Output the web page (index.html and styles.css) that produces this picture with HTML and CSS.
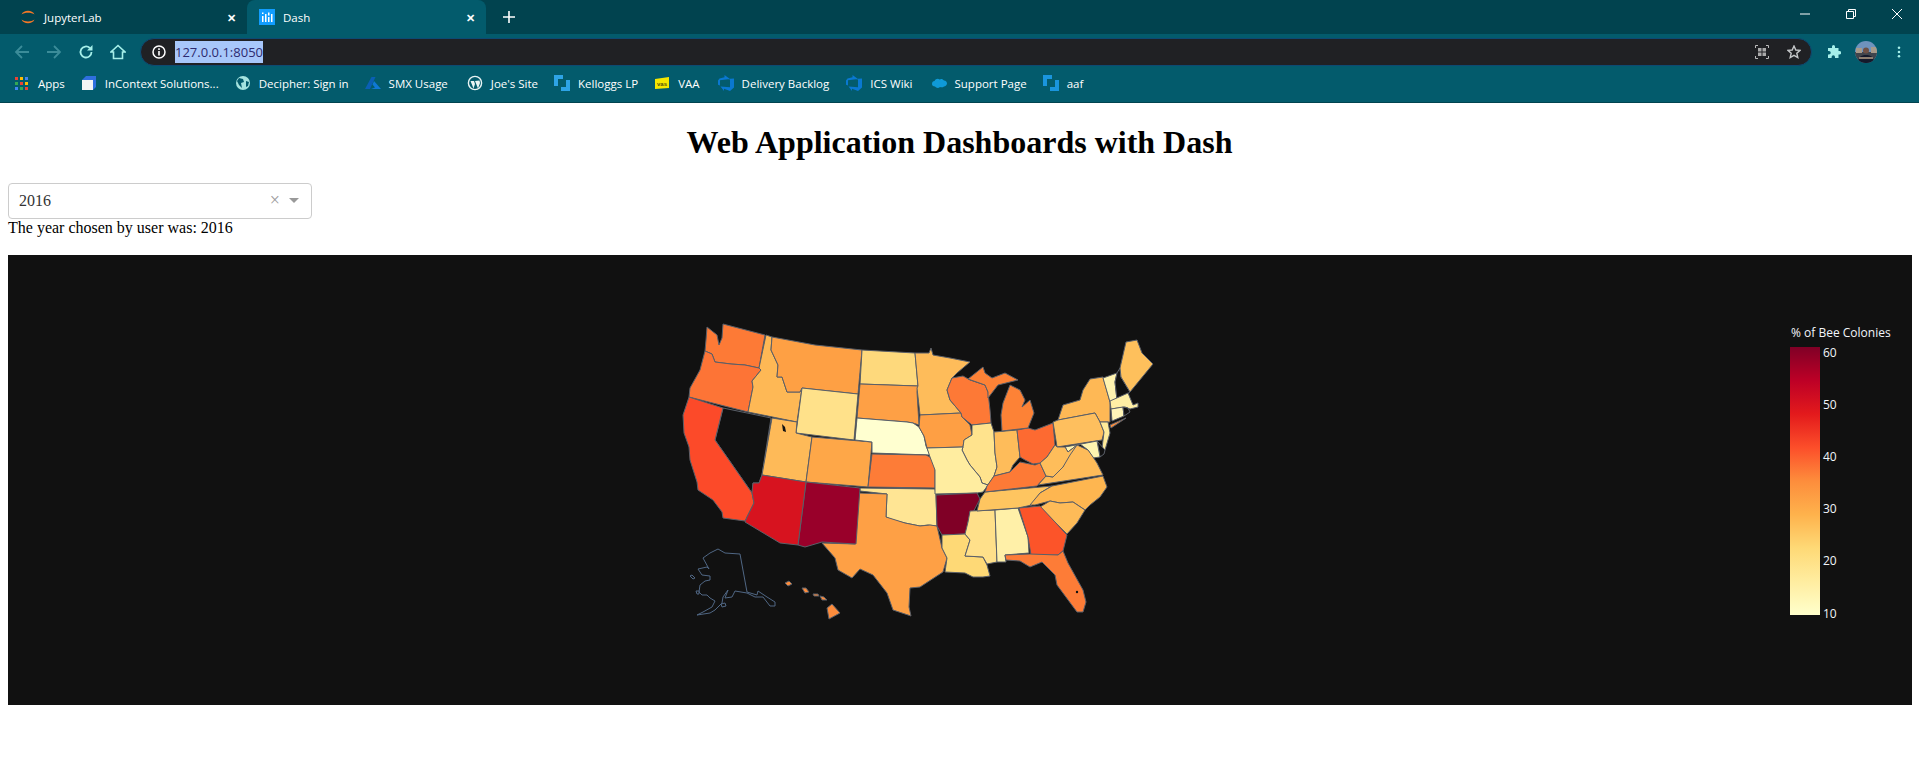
FILE: index.html
```html
<!DOCTYPE html>
<html lang="en">
<head>
    <meta charset="UTF-8">
    <title>Dash</title>
    <link rel="stylesheet" href="styles.css">
</head>
<body>
    <div id="browser">
        <div class="tab-strip">
            <div class="tab">
                <svg class="icon" viewBox="0 0 16 16"><path d="M1.500 5.500C3.500 .5 12.500 .5 14.500 5.500C11.500 3 4.500 3 1.500 5.500ZM1.500 10.500C3.500 15.500 12.500 15.500 14.500 10.500C11.500 13 4.500 13 1.500 10.500Z" fill="#f37726"/></svg>
                <span class="tab-title">JupyterLab</span>
                <span class="tab-close">&#10005;</span>
            </div>
            <div class="tab active">
                <svg class="icon" viewBox="0 0 16 16"><rect width="16" height="16" fill="#119dff"/><path d="M3 7h1.500v6H3zM6 5h1.500v8H6zM9 8h1.500v5H9zM12 5h1.500v8H12zM3 3.500h1.500v1.500H3zM9 3.500h1.500v3H9z" fill="#fff"/></svg>
                <span class="tab-title">Dash</span>
                <span class="tab-close">&#10005;</span>
            </div>
            <svg class="new-tab" viewBox="0 0 12 12"><path d="M6 0v12M0 6h12" stroke="#fff" stroke-width="1.600"/></svg>
            <div class="window-controls">
                <svg viewBox="0 0 10 10"><path d="M0 5h10" stroke="#fff"/></svg>
                <svg viewBox="0 0 10 10"><path d="M.5 2.500h7v7h-7zM2.500 2.500v-2h7v7h-2" fill="none" stroke="#fff"/></svg>
                <svg viewBox="0 0 10 10"><path d="M0 0l10 10M10 0L0 10" stroke="#fff"/></svg>
            </div>
        </div>
        <div class="toolbar">
            <svg class="nav dim" viewBox="0 0 16 16"><path d="M15 8H2M8 2L2 8l6 6" fill="none" stroke="#3b8c99" stroke-width="1.800"/></svg>
            <svg class="nav dim" viewBox="0 0 16 16"><path d="M1 8h13M8 2l6 6-6 6" fill="none" stroke="#3b8c99" stroke-width="1.800"/></svg>
            <svg class="nav" viewBox="0 0 16 16"><path d="M13.500 8A5.500 5.500 0 1 1 11.800 4" fill="none" stroke="#a5efe9" stroke-width="1.800"/><path d="M14.500 1v5.500H9z" fill="#a5efe9"/></svg>
            <svg class="nav" viewBox="0 0 16 16"><path d="M8 1.500L1 8h2.500v6.500h9V8H15z" fill="none" stroke="#a5efe9" stroke-width="1.600"/></svg>
            <div class="omnibox">
                <svg class="info" viewBox="0 0 14 14"><circle cx="7" cy="7" r="6" fill="none" stroke="#fff" stroke-width="1.500"/><path d="M6.200 6h1.600v4.500H6.200zM6.200 3.300h1.600v1.600H6.200z" fill="#fff"/></svg>
                <span class="url">127.0.0.1:8050</span>
                <svg class="qr" viewBox="0 0 14 14"><path d="M.5 3V.5H3M11 .5h2.500V3M13.500 11v2.500H11M3 13.500H.5V11" fill="none" stroke="#bbb"/><path d="M3 3h3.500v3.500H3zM7.500 3H11v3.500H7.500zM3 7.500h3.500V11H3zM7.500 7.500H11V11H7.500z" fill="#aaa"/></svg>
                <svg class="star" viewBox="0 0 14 14"><path d="M7 1l1.800 4 4.200.4-3.200 2.800 1 4.300L7 10.300l-3.800 2.200 1-4.300L1 5.400 5.200 5z" fill="none" stroke="#c4c7c9" stroke-width="1.400"/></svg>
            </div>
            <svg class="puzzle" viewBox="0 0 14 14"><path d="M5 1.500a1.500 1.500 0 0 1 3 0V3h3.500v3h1a1.700 1.700 0 0 1 0 3.500h-1V13H8v-1a1.700 1.700 0 0 0-3.400 0v1H1V9.500h1a1.700 1.700 0 0 0 0-3.500H1V3h4z" fill="#a5efe9"/></svg>
            <svg class="avatar" viewBox="0 0 22 22"><defs><clipPath id="round"><circle cx="11" cy="11" r="11"/></clipPath></defs><g clip-path="url(#round)"><rect width="22" height="22" fill="#6f93bd"/><rect y="11" width="22" height="11" fill="#3f444c"/><path d="M1 7h6v5H1zM16 6h6v6h-6z" fill="#a79a8a"/><path d="M3 22c0-6 3-8 8-8s8 2 8 8z" fill="#14192b"/><circle cx="11" cy="9.500" r="3" fill="#6e5044"/><path d="M4 16h14v2H4z" fill="#8d7e70"/></g></svg>
            <svg class="menu" viewBox="0 0 4 14"><circle cx="2" cy="2" r="1.500" fill="#a5efe9"/><circle cx="2" cy="7" r="1.500" fill="#a5efe9"/><circle cx="2" cy="12" r="1.500" fill="#a5efe9"/></svg>
        </div>
        <div class="bookmarks">
            <div class="bookmark">
                <svg class="icon apps" viewBox="0 0 13 13"><path d="M0 0h3v3H0z" fill="#ea4335"/><path d="M5 0h3v3H5z" fill="#fbbc05"/><path d="M10 0h3v3h-3z" fill="#4285f4"/><path d="M0 5h3v3H0z" fill="#34a853"/><path d="M5 5h3v3H5z" fill="#ea4335"/><path d="M10 5h3v3h-3z" fill="#fbbc05"/><path d="M0 10h3v3H0z" fill="#4285f4"/><path d="M5 10h3v3H5z" fill="#34a853"/><path d="M10 10h3v3h-3z" fill="#ea4335"/></svg>
                Apps
            </div>
            <div class="bookmark">
                <svg class="icon" viewBox="0 0 16 16"><path d="M1 5l4-4h10v11l-3 3z" fill="#2f6fde"/><path d="M1 5h11v10H1z" fill="#f4f4f4"/></svg>
                InContext Solutions...
            </div>
            <div class="bookmark">
                <svg class="icon" viewBox="0 0 16 16"><circle cx="8" cy="8" r="7" fill="#a5e3df"/><path d="M4 3l4 1 1 3-3 1 1 5-3-3-2-4zM11 6l3 1-1 4-2 1z" fill="#035b6c"/></svg>
                Decipher: Sign in
            </div>
            <div class="bookmark">
                <svg class="icon" viewBox="0 0 16 16"><path d="M6.500 2h4L5 14H0z" fill="#0a5fb4"/><path d="M9 6l7 8H6l4-1.500-2.500-3z" fill="#0f78d4"/></svg>
                SMX Usage
            </div>
            <div class="bookmark nudge-3">
                <svg class="icon" viewBox="0 0 16 16"><circle cx="8" cy="8" r="6.600" fill="none" stroke="#e8f4f4" stroke-width="1.400"/><path d="M3.500 6l3 7.500 1.500-4.500-1-3zM8 6l3 7.500L13 8l-.5-2.500z" fill="#e8f4f4"/></svg>
                Joe's Site
            </div>
            <div class="bookmark">
                <svg class="icon" viewBox="0 0 16 16"><path d="M0 0h9v4H4v7H0zM7 16v-4h5V5h4v11z" fill="#2ea4e6"/></svg>
                Kelloggs LP
            </div>
            <div class="bookmark">
                <svg class="icon" viewBox="0 0 16 16"><path d="M1 4l14-2v11L1 14z" fill="#f5e700"/><text class="vas" x="8" y="10.500">vas</text></svg>
                VAA
            </div>
            <div class="bookmark nudge-2">
                <svg class="icon" viewBox="0 0 16 16"><path d="M16 3.500v9L12 16l-6-2.200V16l-3.500-4.500 9.500.8V3.800zM12 4L6.500 0v2.200L1.500 3.600 0 5.500v4.200l2 .9V5.200z" fill="#0a78d1"/></svg>
                Delivery Backlog
            </div>
            <div class="bookmark nudge-1">
                <svg class="icon" viewBox="0 0 16 16"><path d="M16 3.500v9L12 16l-6-2.200V16l-3.500-4.500 9.500.8V3.800zM12 4L6.500 0v2.200L1.500 3.600 0 5.500v4.200l2 .9V5.200z" fill="#0a78d1"/></svg>
                ICS Wiki
            </div>
            <div class="bookmark nudge-2">
                <svg class="icon" viewBox="0 0 16 16"><path d="M1 9c0-2 1-3 2.500-3C4.500 4 7 3 8.500 4.500 10 3.500 12 4 13 5.500c2 0 3 1.500 3 3s-1.500 3-3 3c-1 1-3 1-4 .5-1.500 1.500-4 1-5-.5C2 11.500 1 10.500 1 9z" fill="#0f9ad7"/></svg>
                Support Page
            </div>
            <div class="bookmark">
                <svg class="icon" viewBox="0 0 16 16"><path d="M0 0h9v4H4v7H0zM7 16v-4h5V5h4v11z" fill="#1a95dd"/></svg>
                aaf
            </div>
        </div>
    </div>

    <div id="page">
        <h1>Web Application Dashboards with Dash</h1>
        <div class="dropdown">
            <span class="dropdown-value">2016</span>
            <span class="dropdown-clear">&times;</span>
            <span class="dropdown-caret"></span>
        </div>
        <div class="output">The year chosen by user was: 2016</div>

        <!-- viewBox is in page pixels so the state coordinates read off the screen directly -->
        <svg id="plot" viewBox="8 255 1904 450">
            <defs>
                <linearGradient id="ylorrd" x1="0" y1="1" x2="0" y2="0">
                    <stop offset="0" stop-color="#ffffcc"/>
                    <stop offset=".125" stop-color="#ffeda0"/>
                    <stop offset=".25" stop-color="#fed976"/>
                    <stop offset=".375" stop-color="#feb24c"/>
                    <stop offset=".5" stop-color="#fd8d3c"/>
                    <stop offset=".625" stop-color="#fc4e2a"/>
                    <stop offset=".75" stop-color="#e31a1c"/>
                    <stop offset=".875" stop-color="#bd0026"/>
                    <stop offset="1" stop-color="#800026"/>
                </linearGradient>
            </defs>
            <g class="states">
                <polygon fill="#111111" points="723,408 771,418 762,475 759,483 753,483 752,493 715,440"/>
                <polygon fill="#fd7a36" points="707,327 717,335 719,345 722,338 723,324 765,335 759,368 745,365 731,364 715,362 712,354 705,351 706,340"/>
                <polygon fill="#fd7436" points="705,351 712,354 715,362 731,364 745,365 759,368 761,370 752,381 753,387 748,412 689,397 690,388 700,370"/>
                <polygon fill="#fc4a29" points="689,397 723,408 715,440 752,493 754,503 747,517 745,521 723,518 722,512 713,500 698,490 697,482 690,460 689,447 684,433 683,415"/>
                <polygon fill="#feb855" points="766,335 772,337 771,350 778,365 777,377 782,377 787,392 800,392 802,388 797,422 748,412 753,387 752,381 761,370 759,368"/>
                <polygon fill="#fea044" points="772,337 815,345 862,350 858,394 802,388 800,392 787,392 782,377 777,377 778,365 771,350"/>
                <polygon fill="#ffe18a" points="802,388 858,394 854,440 796,433"/>
                <polygon fill="#feba58" points="772,418 797,422 796,433 812,437 806,482 762,475"/>
                <polygon fill="#fea748" points="812,437 872,442 868,487 806,482"/>
                <polygon fill="#fed97c" points="862,350 915,353 918,386 860,384"/>
                <polygon fill="#fea045" points="860,384 918,386 917,392 919,425 913,423 907,422 857,418"/>
                <polygon fill="#ffffd0" points="857,418 907,422 913,423 919,427 924,436 926,446 930,455 872,453 872,442 855,440"/>
                <polygon fill="#fd7c37" points="872,454 926,455 930,457 935,465 935,488 868,487"/>
                <polygon fill="#ffe594" points="860,488 935,489 936,495 937,526 928,525 920,526 905,523 893,520 886,517 887,494 860,491"/>
                <polygon fill="#fea045" points="859,493 887,494 886,517 905,523 920,526 930,525 937,526 942,548 947,558 943,572 920,587 910,588 909,607 911,616 893,610 887,593 873,575 860,569 852,578 838,570 835,558 822,543 855,544"/>
                <polygon fill="#99002a" points="806,482 860,488 856,544 822,542 805,547 798,545"/>
                <polygon fill="#d7131f" points="762,475 806,482 798,545 780,543 745,522 747,517 754,503 752,493 753,483 759,483"/>
                <polygon fill="#febc5a" points="915,353 929,353 931,348 933,355 950,358 970,362 957,373 952,378 947,390 950,400 961,413 920,415 917,388 918,386"/>
                <polygon fill="#fe9f44" points="920,415 961,413 962,417 970,425 972,435 964,440 963,447 927,448 924,436 919,427"/>
                <polygon fill="#fd7936" points="952,378 963,376 970,380 985,385 988,392 990,410 991,423 972,425 962,417 961,413 950,400 947,390"/>
                <polygon fill="#ffe38d" points="972,425 991,423 994,432 995,453 997,467 994,476 988,485 982,483 980,477 970,465 967,460 962,450 963,447 964,440 972,435"/>
                <polygon fill="#febc5a" points="994,432 1017,430 1020,457 1013,465 1010,472 994,476 997,467 995,453"/>
                <polygon fill="#ffeda0" points="927,448 963,447 962,450 967,460 970,465 980,477 982,483 988,485 983,492 977,493 935,494 935,470 930,457"/>
                <polygon fill="#800026" points="936,495 977,493 980,499 968,522 968,528 965,534 942,535 937,526"/>
                <polygon fill="#fed976" points="942,535 965,534 970,540 965,556 983,557 987,565 990,576 983,577 973,577 965,573 945,572 947,558 942,548"/>
                <polygon fill="#ffe08a" points="970,511 995,510 997,562 987,564 983,557 965,556 970,540 965,534 968,522"/>
                <polygon fill="#fff0a8" points="995,510 1018,508 1028,537 1029,553 1005,555 1006,562 997,562"/>
                <polygon fill="#fec560" points="980,499 985,492 1052,486 1040,493 1032,505 1018,508 977,511"/>
                <polygon fill="#fd7a36" points="985,492 987,486 994,476 1010,472 1020,462 1035,465 1040,463 1046,476 1037,486"/>
                <polygon fill="#fd6a31" points="1017,430 1028,428 1035,430 1053,423 1055,445 1047,457 1040,463 1033,464 1025,460 1020,457"/>
                <polygon fill="#fd8236" points="1003,403 1010,385 1020,390 1025,400 1022,407 1030,400 1034,413 1028,428 1002,431 1001,415"/>
                <polygon fill="#fd8236" points="968,379 983,367 985,373 992,378 1005,373 1018,380 1010,382 998,385 988,398 988,392 985,385"/>
                <polygon fill="#feb855" points="1058,420 1063,405 1080,400 1083,390 1090,379 1103,377 1110,402 1110,422 1100,422 1095,413"/>
                <polygon fill="#febf5e" points="1053,422 1058,420 1095,413 1100,422 1104,432 1102,440 1057,447"/>
                <polygon fill="#fff3b0" points="1103,378 1117,373 1115,382 1117,400 1110,402"/>
                <polygon fill="#111111" points="1117,373 1120,368 1121,377 1130,392 1117,400 1115,382"/>
                <polygon fill="#fec05c" points="1120,368 1126,342 1137,340 1142,353 1153,364 1130,392 1121,377"/>
                <polygon fill="#ffefa5" points="1110,401 1128,393 1133,405 1138,403 1138,407 1130,409 1125,407 1111,409"/>
                <polygon fill="#fff5b8" points="1111,409 1123,407 1124,416 1112,421"/>
                <polygon fill="#111111" points="1123,407 1128,408 1130,412 1124,416"/>
                <polygon fill="#fd8d3c" points="1110,425 1126,418 1117,424 1111,428"/>
                <polygon fill="#ffeb9a" points="1100,422 1108,422 1110,433 1105,450 1102,448 1104,432"/>
                <polygon fill="#111111" points="1097,441 1105,450 1104,454 1100,457"/>
                <polygon fill="#fff4b0" points="1065,447 1097,441 1100,457 1093,458 1088,450 1080,444 1068,452"/>
                <polygon fill="#febb59" points="1038,485 1046,476 1053,477 1063,467 1068,452 1077,445 1088,450 1093,457 1097,463 1103,475"/>
                <polygon fill="#febd5a" points="1055,445 1057,447 1065,447 1068,452 1077,445 1070,455 1063,467 1053,477 1046,476 1040,463 1047,457"/>
                <polygon fill="#feb650" points="1052,486 1103,476 1107,487 1100,497 1090,505 1085,510 1073,502 1060,503 1050,501 1035,505 1030,505 1040,493"/>
                <polygon fill="#febb58" points="1050,501 1060,503 1073,502 1085,510 1077,523 1067,534 1055,522 1040,507"/>
                <polygon fill="#fc5429" points="1019,508 1040,506 1055,522 1067,535 1063,551 1058,555 1031,555 1028,537"/>
                <polygon fill="#fd7c37" points="1005,555 1030,554 1058,555 1063,551 1068,563 1083,590 1086,602 1083,612 1077,612 1057,585 1055,575 1042,562 1030,567 1020,561 1006,560"/>
                <polygon fill="#fd8c3c" points="785,583 789,581 792,584 788,586"/>
                <polygon fill="#fd8c3c" points="802,588 806,588 809,592 805,593"/>
                <polygon fill="#fd8c3c" points="813,594 818,594 819,596 814,596"/>
                <polygon fill="#fd8c3c" points="820,596 824,597 827,600 822,600"/>
                <polygon fill="#fd8c3c" points="827,608 832,604 840,613 829,619"/>
                <g class="no-data">
                    <polygon fill="#111111" points="703,558 710,553 718,549 725,553 740,554 747,592 757,595 758,591 767,597 775,602 775,606 770,606 763,597 755,597 747,593 735,591 732,597 725,598 728,590 723,597 722,603 715,610 710,613 697,615 703,612 712,607 715,601 710,598 707,595 702,595 699,592 700,585 705,581 710,580 710,576 702,575 698,569 707,567 709,569"/>
                    <polygon fill="#111111" points="690,576 692,575 695,578 693,579"/>
                    <polygon fill="#111111" points="696,591 699,591 699,594 697,594"/>
                    <polygon fill="#111111" points="721,604 725,603 726,606 722,607"/>
                </g>
                <polygon class="lake" points="782,424 785,427 786,432 783,431"/>
                <circle class="lake" cx="1077" cy="592" r="1.200"/>
            </g>
            <rect x="1790" y="347" width="30" height="268" fill="url(#ylorrd)"/>
            <text class="bar-title" x="1791" y="337">% of Bee Colonies</text>
            <text class="bar-tick" x="1823" y="357">60</text>
            <text class="bar-tick" x="1823" y="409">50</text>
            <text class="bar-tick" x="1823" y="461">40</text>
            <text class="bar-tick" x="1823" y="513">30</text>
            <text class="bar-tick" x="1823" y="565">20</text>
            <text class="bar-tick" x="1823" y="618">10</text>
        </svg>
    </div>
</body>
</html>
```

FILE: styles.css
```css
html, body {
    margin: 0;
    padding: 0;
    background-color: #fff;
    overflow: hidden;
}
body {
    height: 760px;
    font-family: "Liberation Serif", serif;
}
svg {
    display: block;
    flex: none;
}

/* browser chrome */
#browser {
    font-family: "Open Sans", sans-serif;
    font-size: 11.5px;
    color: #fff;
}
.tab-strip {
    display: flex;
    align-items: flex-end;
    height: 34px;
    padding-left: 8px;
    background-color: #01434f;
}
.tab {
    display: flex;
    align-items: center;
    width: 239px;
    height: 34px;
    box-sizing: border-box;
    padding: 0 11px 0 12px;
    border-radius: 8px 8px 0 0;
}
.tab.active {
    background-color: #035b6c;
}
.icon {
    width: 16px;
    height: 16px;
}
.tab-title {
    flex: 1;
    margin-left: 8px;
}
.tab-close {
    font-size: 11px;
    font-weight: 700;
}
.new-tab {
    width: 12px;
    height: 12px;
    margin: 0 0 11px 17px;
}
.window-controls {
    display: flex;
    align-items: center;
    gap: 36px;
    height: 28px;
    margin-left: auto;
    margin-right: 17px;
    align-self: flex-start;
}
.window-controls svg {
    width: 10px;
    height: 10px;
}
.toolbar {
    display: flex;
    align-items: center;
    height: 34px;
    box-sizing: border-box;
    padding: 2px 0 0 14px;
    background-color: #035b6c;
}
.nav {
    width: 16px;
    height: 16px;
    margin-right: 16px;
}
.omnibox {
    display: flex;
    align-items: center;
    width: 1672px;
    height: 28px;
    box-sizing: border-box;
    margin-left: -2px;
    padding: 0 10px 0 11px;
    background-color: #202124;
    border: 1px solid #0d4a73;
    border-radius: 14px;
}
.info {
    width: 14px;
    height: 14px;
}
.url {
    margin-left: 9px;
    padding: 1px 0;
    width: 88px;
    font-size: 13px;
    line-height: 20px;
    white-space: nowrap;
    color: #2d2a70;
    background-color: #a8c7fa;
}
.qr {
    width: 14px;
    height: 14px;
    margin-left: auto;
}
.star {
    width: 14px;
    height: 14px;
    margin-left: 18px;
}
.puzzle {
    width: 14px;
    height: 14px;
    margin-left: 15px;
}
.avatar {
    width: 22px;
    height: 22px;
    margin-left: 14px;
}
.menu {
    width: 4px;
    height: 12px;
    margin-left: 20px;
}
.bookmarks {
    display: flex;
    align-items: center;
    gap: 16px;
    height: 35px;
    box-sizing: border-box;
    padding: 0 0 4px 15px;
    background-color: #035b6c;
    border-bottom: 1px solid #01434f;
}
.bookmark {
    display: flex;
    align-items: center;
    gap: 8px;
    white-space: nowrap;
}
.nudge-1 {
    margin-left: 1px;
}
.nudge-2 {
    margin-left: 2px;
}
.nudge-3 {
    margin-left: 3px;
}
.apps {
    width: 13px;
    height: 13px;
    margin-right: 2px;
}
.vas {
    font-family: "Liberation Sans", sans-serif;
    font-size: 6px;
    font-weight: 700;
    fill: #55520a;
    text-anchor: middle;
}

/* dash layout */
#page {
    padding: 0 8px;
}
h1 {
    text-align: center;
    color: #000;
}
.dropdown {
    display: flex;
    align-items: center;
    width: 304px;
    height: 36px;
    box-sizing: border-box;
    padding: 0 12px 0 10px;
    background-color: #fff;
    border: 1px solid #ccc;
    border-radius: 4px;
}
.dropdown-value {
    flex: 1;
    font-size: 16px;
    color: #333;
}
.dropdown-clear {
    font-size: 18px;
    color: #999;
    margin-right: 9px;
}
.dropdown-caret {
    border-style: solid;
    border-width: 5px 5px 0;
    border-color: #999 transparent transparent;
}
.output {
    font-size: 16px;
    color: #000;
    height: 18px;
}
#plot {
    width: 1904px;
    height: 450px;
    margin-top: 18px;
    background-color: #111111;
}
.states polygon {
    stroke: #5a5f68;
    stroke-width: 1;
    stroke-linejoin: round;
}
.states .no-data polygon {
    stroke: #506784;
}
.lake {
    fill: #111111;
    stroke: none !important;
}
.bar-title, .bar-tick {
    font-family: "Open Sans", sans-serif;
    font-size: 12px;
    fill: #f2f5fa;
}
```
